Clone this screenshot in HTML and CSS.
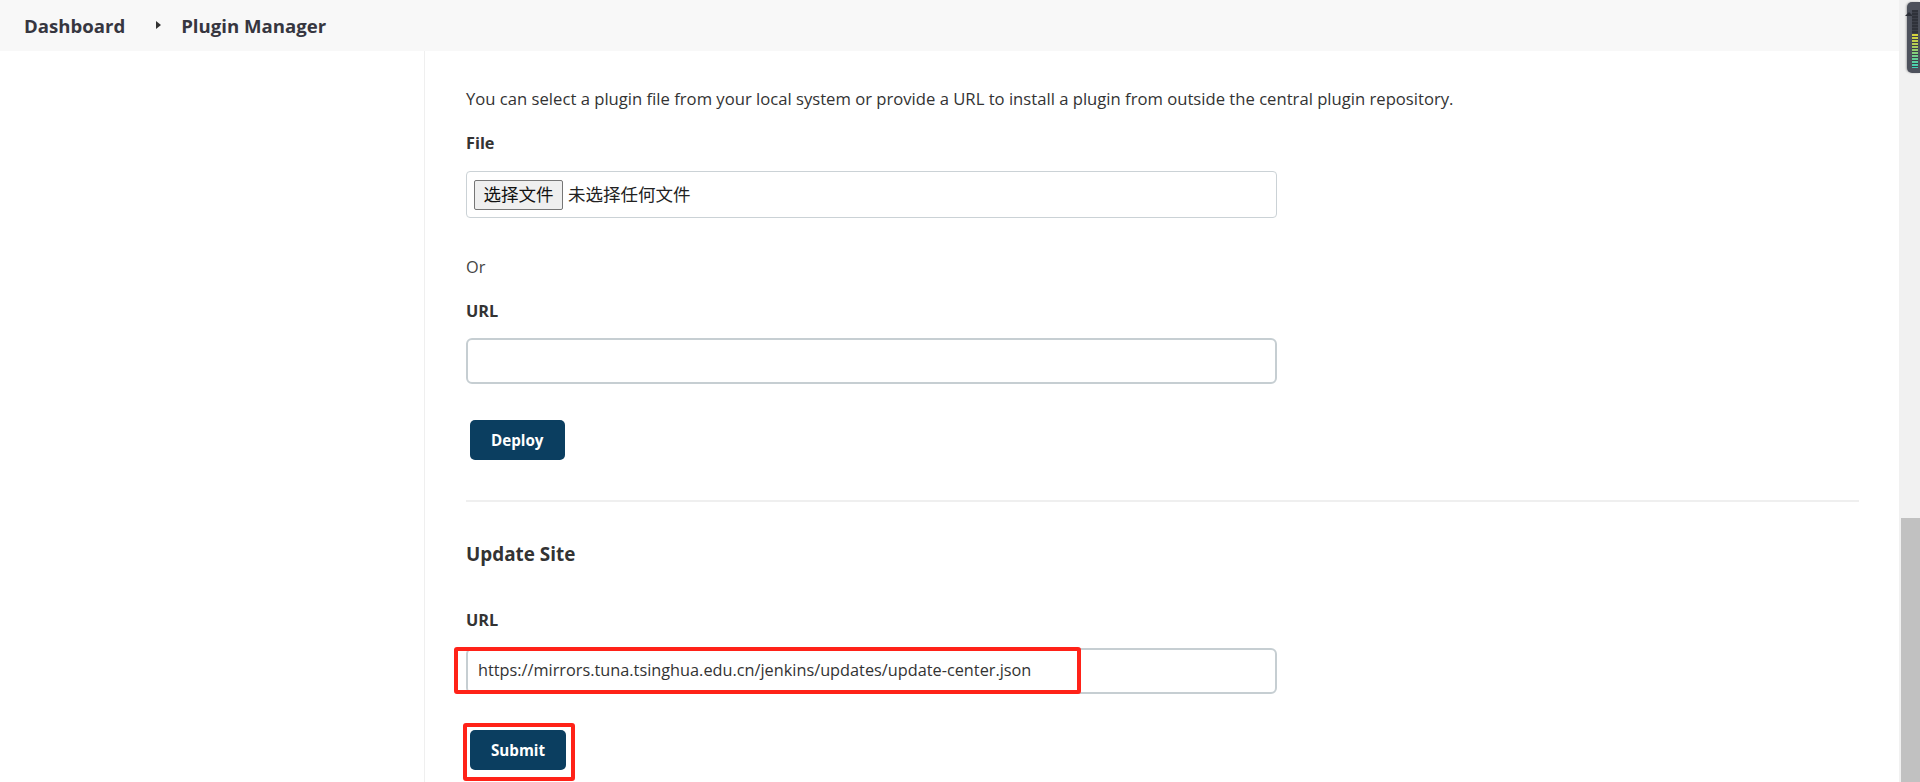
FILE: index.html
```html
<!DOCTYPE html>
<html lang="en">
<head>
<meta charset="utf-8">
<title>Plugin Manager</title>
<link rel="stylesheet" href="styles.css">
</head>
<body>
<div class="window">
  <div class="viewport">
    <header class="breadcrumbs">
      <a class="crumb">Dashboard</a>
      <span class="crumb-sep"></span>
      <a class="crumb">Plugin Manager</a>
    </header>
    <div class="page">
      <aside class="side"></aside>
      <main class="main">
        <p class="intro">You can select a plugin file from your local system or provide a URL to install a plugin from outside the central plugin repository.</p>
        <div class="label label-first">File</div>
        <div class="file-box">
          <span class="file-btn">选择文件</span>
          <span class="file-name">未选择任何文件</span>
        </div>
        <p class="or">Or</p>
        <div class="label">URL</div>
        <div class="text-input"></div>
        <div class="btn-row"><button class="btn">Deploy</button></div>
        <div class="divider"></div>
        <h2 class="section-title">Update Site</h2>
        <div class="label label-url2">URL</div>
        <div class="mark-wrap">
          <div class="text-input">https://mirrors.tuna.tsinghua.edu.cn/jenkins/updates/update-center.json</div>
          <span class="mark mark-input"></span>
        </div>
        <div class="btn-row mark-wrap">
          <button class="btn">Submit</button>
          <span class="mark mark-btn"></span>
        </div>
      </main>
    </div>
  </div>
  <div class="scrollbar"><div class="thumb"></div></div>
  <div class="meter"><span class="meter-arrow"></span><span class="meter-bars"></span></div>
</div>
</body>
</html>
```
FILE: styles.css
```css
* { box-sizing: border-box; }
html, body { margin: 0; padding: 0; height: 100%; }
body {
  font-family: "Open Sans", "Noto Sans", "Noto Sans CJK SC", sans-serif;
  font-size: 16.3px;
  line-height: 24.5px;
  color: #333;
  background: #fff;
  overflow: hidden;
}
.window { display: flex; height: 782px; position: relative; }
.viewport { flex: 1; display: flex; flex-direction: column; min-width: 0; }

.breadcrumbs {
  height: 51px;
  background: #f8f8f8;
  display: flex;
  align-items: center;
  padding-left: 24px;
  padding-top: 1px;
}
.crumb { font-weight: 700; font-size: 18.6px; color: #363640; }
.crumb-sep {
  width: 0; height: 0;
  border-top: 4px solid transparent;
  border-bottom: 4px solid transparent;
  border-left: 5px solid #333;
  margin: 0 20px 2px 31px;
}

.page { flex: 1; display: flex; }
.side { width: 425px; border-right: 1px solid #efefef; flex: none; }
.main { flex: 1; padding: 36px 40px 0 41px; }

.intro { margin: 0; font-size: 16.65px; }
.label { font-weight: 700; margin-top: 19.5px; }
.file-box {
  margin-top: 15px;
  width: 811px;
  height: 47px;
  border: 1.5px solid #cbd2d6;
  border-radius: 4px;
  display: flex;
  align-items: center;
  padding: 0 7px;
  gap: 5px;
  font-family: "Noto Sans CJK SC", sans-serif;
  font-size: 17.5px;
  color: #222;
}
.file-btn {
  height: 30px;
  width: 89px;
  background: #efefef;
  border: 1px solid #767676;
  border-radius: 2px;
  display: flex;
  align-items: center;
  justify-content: center;
  color: #111;
  margin-top: 1px;
}
.or { margin: 37px 0 0; color: #444; }
.text-input {
  margin-top: 15px;
  width: 811px;
  height: 46px;
  border: 2px solid #c6ced2;
  border-radius: 6px;
  padding: 0 10px;
  display: flex;
  align-items: center;
  color: #333;
}
.btn-row { margin-top: 36px; padding-left: 4px; display: flex; }
.btn {
  height: 40px;
  padding: 0 21px;
  min-width: 94px;
  background: #0b3e60;
  color: #fff;
  border: none;
  border-radius: 5px;
  font-family: "Open Sans", "Noto Sans", sans-serif;
  font-weight: 700;
  font-size: 15.2px;
}
.divider { margin-top: 40px; height: 2px; background: #efefef; }
.section-title {
  margin: 38px 0 0;
  font-size: 18.9px;
  font-weight: 700;
  line-height: 29px;
}
.label-url2 { margin-top: 39px; }

.mark-wrap { position: relative; }
.mark { position: absolute; border: 4px solid #ff2218; border-radius: 3px; pointer-events: none; }
.mark-input { left: -12px; top: -1px; width: 627px; height: 47px; }
.mark-btn { left: -3px; top: -7px; width: 112px; height: 58px; }

.scrollbar { width: 21px; background: #f1f1f1; display: flex; flex-direction: column; justify-content: flex-end; }
.thumb { height: 264px; margin-left: 2px; background: #c1c1c1; }

.meter {
  position: absolute; right: 0; top: 2px;
  width: 13px; height: 71px;
  background: #4d515c;
  border-radius: 5px 0 0 5px;
  box-shadow: -1px 0 2px rgba(0,0,0,0.25);
}
.meter-arrow {
  position: absolute; left: -2px; top: 10px;
  width: 0; height: 0;
  border-left: 4px solid transparent; border-right: 4px solid transparent;
  border-bottom: 4px solid #2b2e36;
}
.meter-bars {
  position: absolute; left: 5px; top: 8px; width: 6px; height: 58px;
  background:
    repeating-linear-gradient(to bottom, transparent 0 2px, #3c3f48 2px 3px),
    linear-gradient(to bottom, #2f323a 0%, #2f323a 40%, #d6d23c 42%, #b6cf54 60%, #6fcf8c 80%, #3fd0b8 100%);
}
```
